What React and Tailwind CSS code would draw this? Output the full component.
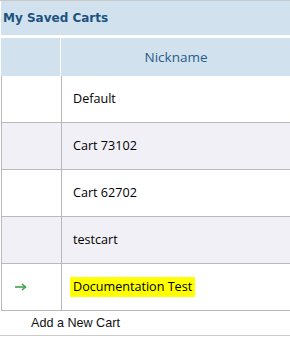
export default function App() {
  const rows = ["Default", "Cart 73102", "Cart 62702", "testcart", "Documentation Test"];
  return (
    <div className="w-[290px] h-[350px] bg-white overflow-hidden">
      <div className="border-t border-[#c8c8c8]">
        <div className="ml-[1px] h-[34px] bg-[#d1e2ee] flex items-center pl-[2px] pb-[1px]">
          <span className="text-[12px] font-bold text-[#1d527f]" style={{ fontFamily: '"DejaVu Sans", Verdana, sans-serif' }}>
            My Saved Carts
          </span>
        </div>
        <div className="mt-[3px] ml-[1px] w-[290px]" style={{ fontFamily: '"Open Sans", "Noto Sans", sans-serif' }}>
          <div className="grid grid-cols-[60px_1fr] h-[38px] bg-[#d1e2ee]">
            <div className="border-r border-white" />
            <div className="flex items-center justify-center text-[13.5px] text-[#2a5c88]">Nickname</div>
          </div>
          {rows.map((r, i) => (
            <div
              key={r}
              className={`grid grid-cols-[60px_1fr] h-[47px] border-b border-l border-[#b9b9b9] ${i % 2 === 1 ? "bg-[#f0f0f6]" : "bg-white"}`}
            >
              <div className="border-r border-[#b9b9b9] flex items-center pl-[13px]">
                {i === 4 && (
                  <svg width="12" height="8" viewBox="0 0 12 8">
                    <path d="M0 4 H10" stroke="#3fa34d" strokeWidth="1.6" />
                    <path d="M7 1 L10.5 4 L7 7" stroke="#3fa34d" strokeWidth="1.6" fill="none" />
                  </svg>
                )}
              </div>
              <div className="flex items-center pl-[11px] text-[12.6px] text-black">
                {i === 4 ? (
                  <span className="bg-[#ffff00] px-[3px] py-[1px] -ml-[3px]">{r}</span>
                ) : (
                  r
                )}
              </div>
            </div>
          ))}
        </div>
        <div className="h-[25px] border-b border-[#cccccc] flex items-center pl-[31px]">
          <span className="text-[12.6px] text-[#111]" style={{ fontFamily: '"Liberation Sans", Arial, sans-serif' }}>
            Add a New Cart
          </span>
        </div>
      </div>
    </div>
  );
}
